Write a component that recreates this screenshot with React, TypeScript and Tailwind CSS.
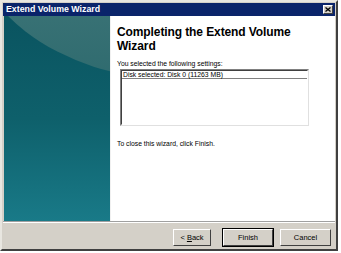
import React from "react";

const Button: React.FC<{ label: React.ReactNode; primary?: boolean; className?: string }> = ({ label, primary, className }) => (
  <button
    className={
      "h-[17px] bg-[#d4d0c8] text-[7.5px] text-black border border-t-white border-l-white border-r-[#404040] border-b-[#404040] " +
      (primary ? "outline outline-1 outline-black " : "") +
      (className ?? "w-[51px]")
    }
  >
    {label}
  </button>
);

export default function App() {
  return (
    <div className="w-[341px] h-[253px] bg-white" style={{ fontFamily: '"Liberation Sans", Arial, sans-serif' }}>
      <div className="w-[338px] h-[251px] bg-[#d4d0c8] border-2 border-t-[#e8e6e0] border-l-[#e8e6e0] border-r-[#404040] border-b-[#404040] flex flex-col">
        {/* title bar */}
        <div className="h-[13px] mt-[1px] mx-[1px] bg-[#0a246a] flex items-center justify-between pl-[3px] pr-[2px]">
          <span className="text-white font-bold text-[8.8px] leading-none">Extend Volume Wizard</span>
          <div className="w-[10px] h-[9px] bg-[#d4d0c8] border border-t-white border-l-white border-r-[#404040] border-b-[#404040] flex items-center justify-center">
            <svg width="6" height="5" viewBox="0 0 6 5">
              <path d="M0.5 0.5 L5.5 4.5 M5.5 0.5 L0.5 4.5" stroke="#000" strokeWidth="1.3" />
            </svg>
          </div>
        </div>
        {/* body */}
        <div className="flex h-[205px] ml-[2px] mr-[1px]">
          <div className="w-[106px] relative overflow-hidden bg-gradient-to-b from-[#0a5460] via-[#0e606b] to-[#197a88]">
            <div className="absolute left-[-40px] top-[-262px] w-[420px] h-[325px] rounded-[50%] bg-gradient-to-b from-[#5a8b8b] to-[#2f6b6f]" />
          </div>
          <div className="flex-1 bg-white border-l border-[#f0f0f0] pl-[6px] pt-[9px]">
            <div className="text-[12px] font-bold leading-[14px] text-black whitespace-nowrap" style={{ letterSpacing: "-0.1px" }}>
              Completing the Extend Volume
              <br />
              Wizard
            </div>
            <div className="mt-[7px] text-[6.8px] text-black leading-[8px]">You selected the following settings:</div>
            <div className="mt-[1px] ml-[3px] w-[189px] h-[57px] bg-white border border-t-[#808080] border-l-[#808080] border-r-[#e0e0e0] border-b-[#e0e0e0]">
              <div className="h-[55px] border border-t-[#404040] border-l-[#404040] border-r-white border-b-white">
                <div className="text-[6.8px] leading-[7px] border-b border-[#808080] pl-[1px]">Disk selected: Disk 0 (11263 MB)</div>
              </div>
            </div>
            <div className="mt-[13px] text-[6.8px] text-black">To close this wizard, click Finish.</div>
          </div>
        </div>
        <div className="mx-[1px] h-[1px] bg-[#a0a0a0]" />
        <div className="mx-[1px] h-[1px] bg-white" />
        {/* button bar */}
        <div className="flex-1 flex items-start justify-end pt-[6px] pr-[5px]">
          <Button label={<span>&lt; <u>B</u>ack</span>} className="w-[38px]" />
          <Button label="Finish" primary className="w-[50px] ml-[12px]" />
          <Button label="Cancel" className="w-[51px] ml-[7px]" />
        </div>
      </div>
    </div>
  );
}
